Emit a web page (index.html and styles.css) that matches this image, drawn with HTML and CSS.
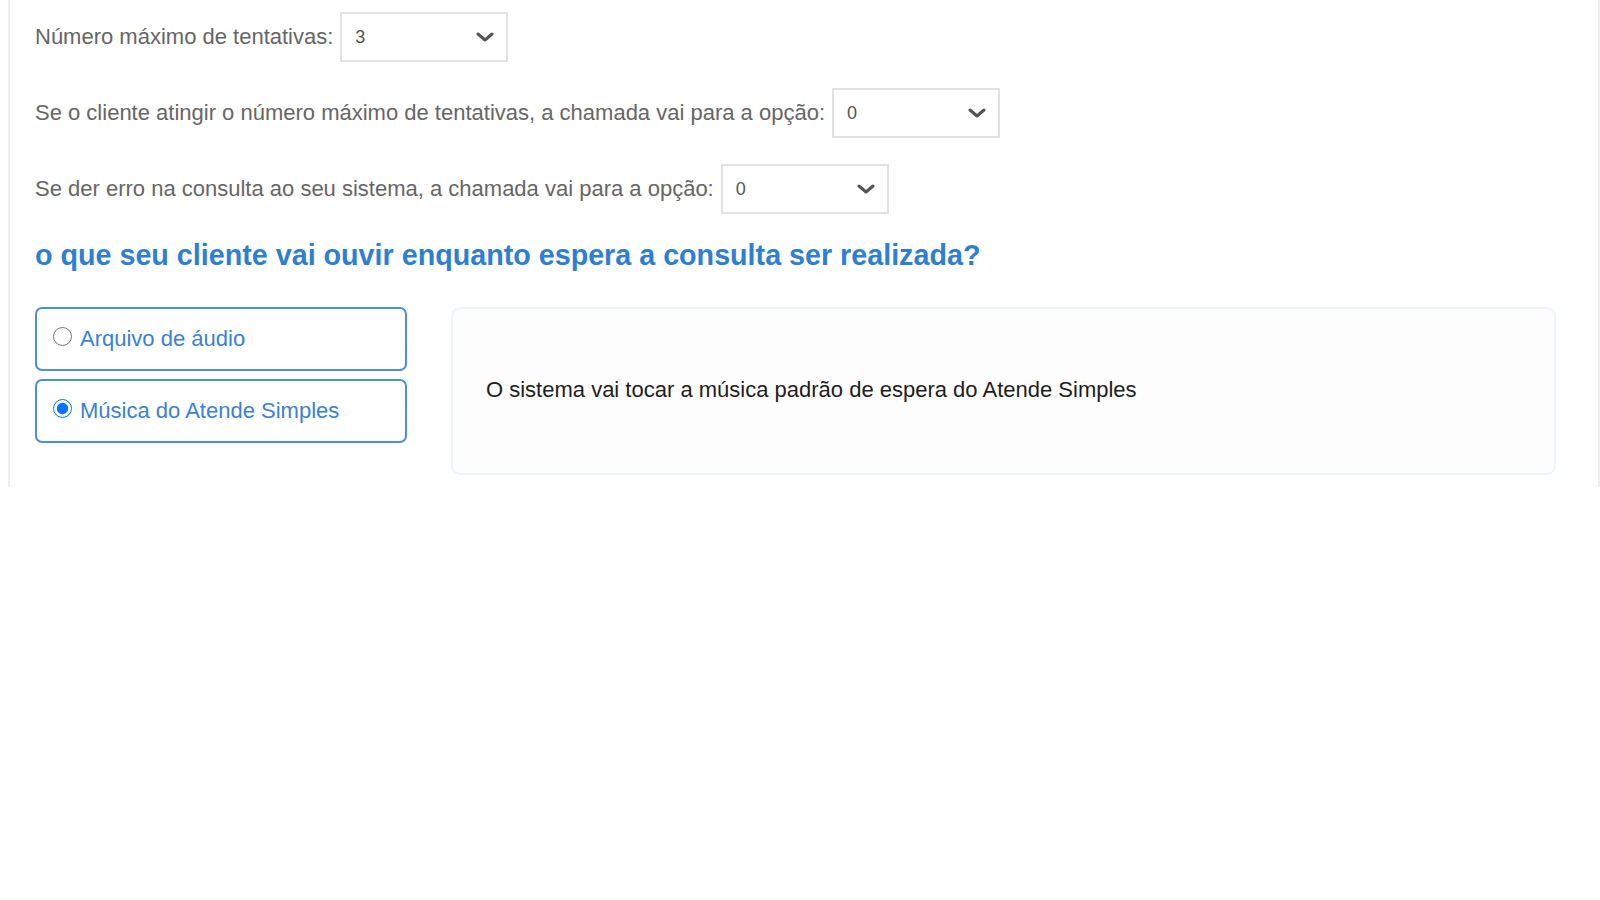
FILE: index.html
```html
<!DOCTYPE html>
<html lang="pt-BR">
<head>
<meta charset="utf-8">
<title>Consulta</title>
<link rel="stylesheet" href="styles.css">
</head>
<body>
<div class="container">
  <div class="field-row">
    <span class="field-label">Número máximo de tentativas:</span>
    <div class="select">
      <span class="select-value">3</span>
      <svg class="chevron" viewBox="0 0 18 10" width="18" height="10"><polyline points="2,2 9,8 16,2" fill="none" stroke="#555" stroke-width="3" stroke-linecap="round" stroke-linejoin="round"/></svg>
    </div>
  </div>
  <div class="field-row">
    <span class="field-label">Se o cliente atingir o número máximo de tentativas, a chamada vai para a opção:</span>
    <div class="select">
      <span class="select-value">0</span>
      <svg class="chevron" viewBox="0 0 18 10" width="18" height="10"><polyline points="2,2 9,8 16,2" fill="none" stroke="#555" stroke-width="3" stroke-linecap="round" stroke-linejoin="round"/></svg>
    </div>
  </div>
  <div class="field-row">
    <span class="field-label">Se der erro na consulta ao seu sistema, a chamada vai para a opção:</span>
    <div class="select">
      <span class="select-value">0</span>
      <svg class="chevron" viewBox="0 0 18 10" width="18" height="10"><polyline points="2,2 9,8 16,2" fill="none" stroke="#555" stroke-width="3" stroke-linecap="round" stroke-linejoin="round"/></svg>
    </div>
  </div>

  <h2 class="section-title">o que seu cliente vai ouvir enquanto espera a consulta ser realizada?</h2>

  <div class="choice-area">
    <div class="choices">
      <label class="choice">
        <input type="radio" name="audio" class="radio">
        <span class="choice-text">Arquivo de áudio</span>
      </label>
      <label class="choice">
        <input type="radio" name="audio" class="radio" checked>
        <span class="choice-text">Música do Atende Simples</span>
      </label>
    </div>
    <div class="info-panel">
      <p class="info-text">O sistema vai tocar a música padrão de espera do Atende Simples</p>
    </div>
  </div>
</div>
</body>
</html>
```

FILE: styles.css
```css
html, body {
  margin: 0;
  padding: 0;
  background: #ffffff;
}

body {
  font-family: "Liberation Sans", Arial, sans-serif;
}

.container {
  box-sizing: border-box;
  margin-left: 8px;
  width: 1592px;
  border-left: 2px solid #efefef;
  border-right: 2px solid #efefef;
  padding: 12px 42px 12px 25px;
}

.field-row {
  display: flex;
  align-items: center;
  gap: 7px;
  margin-bottom: 26px;
}

.field-label {
  font-size: 22px;
  color: #666666;
}

.select {
  box-sizing: border-box;
  width: 168px;
  height: 50px;
  border: 2px solid #e2e2e2;
  display: flex;
  align-items: center;
  justify-content: space-between;
  padding: 0 12px 0 13px;
}

.select-value {
  font-size: 18px;
  color: #555555;
}

.chevron {
  display: block;
}

.section-title {
  margin: 0 0 37px 0;
  font-size: 28.7px;
  line-height: 30px;
  font-weight: bold;
  color: #2e7fd4;
}

.choice-area {
  display: flex;
  gap: 44px;
  align-items: flex-start;
}

.choices {
  width: 372px;
  display: flex;
  flex-direction: column;
  gap: 8px;
}

.choice {
  box-sizing: border-box;
  height: 64px;
  border: 2px solid #4a8fe0;
  border-radius: 7px;
  display: flex;
  align-items: center;
  padding: 0 0 0 16px;
  gap: 8px;
}

.radio {
  margin: 0;
  width: 19px;
  height: 19px;
  position: relative;
  top: -3px;
  accent-color: #0075ff;
}

.choice-text {
  font-size: 22px;
  color: #3a7fd8;
}

.info-panel {
  flex: 1;
  box-sizing: border-box;
  height: 168px;
  border: 2px solid #edf4fc;
  border-radius: 9px;
  background: #fdfdfd;
  display: flex;
  align-items: center;
  padding: 0 33px 2px 33px;
}

.info-text {
  margin: 0;
  font-size: 22px;
  color: #1e1e1e;
}
```
